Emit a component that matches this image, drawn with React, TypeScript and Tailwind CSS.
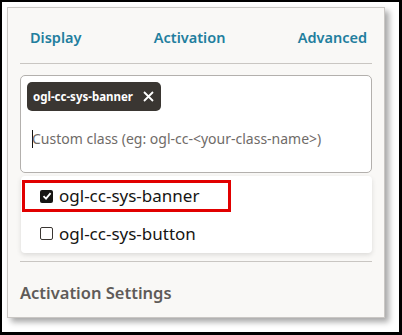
import React from "react";

const font = { fontFamily: '"Noto Sans", "Liberation Sans", sans-serif' };

const CheckBox: React.FC<{ checked: boolean }> = ({ checked }) =>
  checked ? (
    <span className="w-[13px] h-[13px] rounded-[2px] bg-[#161513] flex items-center justify-center">
      <svg width="10" height="10" viewBox="0 0 10 10">
        <path d="M1.5 5.2 L4 7.6 L8.6 2.2" fill="none" stroke="#fff" strokeWidth="1.8" />
      </svg>
    </span>
  ) : (
    <span className="w-[13px] h-[13px] rounded-[2px] border-[1.5px] border-[#3a3632] bg-white" />
  );

const App: React.FC = () => {
  return (
    <div className="w-[402px] h-[335px] bg-black p-[2px] pr-[3px] pb-[3px]" style={font}>
      <div className="w-full h-full bg-white pl-[5px] pt-[5px]">
        <div className="w-[378px] h-[311px] border border-[#cac7c4] bg-[#f9f8f6] shadow-[4px_4px_6px_rgba(0,0,0,0.35)] px-[12px]">
          {/* tabs */}
          <div className="h-[56px] flex items-center justify-between pl-[10px] pr-[5px] pt-[4px] border-b border-[#c9c6c2] text-[14.5px] font-semibold text-[#227e9e]">
            <span>Display</span>
            <span>Activation</span>
            <span>Advanced</span>
          </div>

          {/* input with chips */}
          <div className="mt-[11px] h-[98px] rounded-[5px] border border-[#b3b0ad] bg-white pt-[6px] px-[6px]">
            <div className="inline-flex items-center h-[29px] rounded-[5px] bg-[#3a3632] pl-[6px] pr-[7px] gap-[10px]">
              <span className="text-[11.5px] font-bold text-white">ogl-cc-sys-banner</span>
              <svg width="11" height="11" viewBox="0 0 11 11">
                <path d="M1 1 L10 10 M10 1 L1 10" stroke="#fff" strokeWidth="1.8" />
              </svg>
            </div>
            <div className="mt-[17px] flex items-center pl-[5px] text-[14px] text-[#6f6b68]">
              <span className="w-px h-[18px] bg-[#161513] mr-[-1px]" />
              <span>Custom class (eg: ogl-cc-&lt;your-class-name&gt;)</span>
            </div>
          </div>

          {/* dropdown */}
          <div className="mt-[3px] ml-px h-[77px] rounded-[4px] bg-white shadow-[0_2px_5px_rgba(0,0,0,0.12)] pt-[4px] text-[17px] text-[#161513]">
            <div className="ml-px w-[209px] h-[32px] border-[3px] border-[#e10000] flex items-center pl-[15px] gap-[6px]">
              <CheckBox checked />
              <span>ogl-cc-sys-banner</span>
            </div>
            <div className="h-[42px] flex items-center pl-[19px] gap-[6px] pt-[1px]">
              <CheckBox checked={false} />
              <span>ogl-cc-sys-button</span>
            </div>
          </div>

          <div className="mt-[8px] border-b border-[#c9c6c2]" />
          <div className="mt-[19px] text-[16.5px] font-semibold text-[#5f5b58]">Activation Settings</div>
        </div>
      </div>
    </div>
  );
};

export default App;
